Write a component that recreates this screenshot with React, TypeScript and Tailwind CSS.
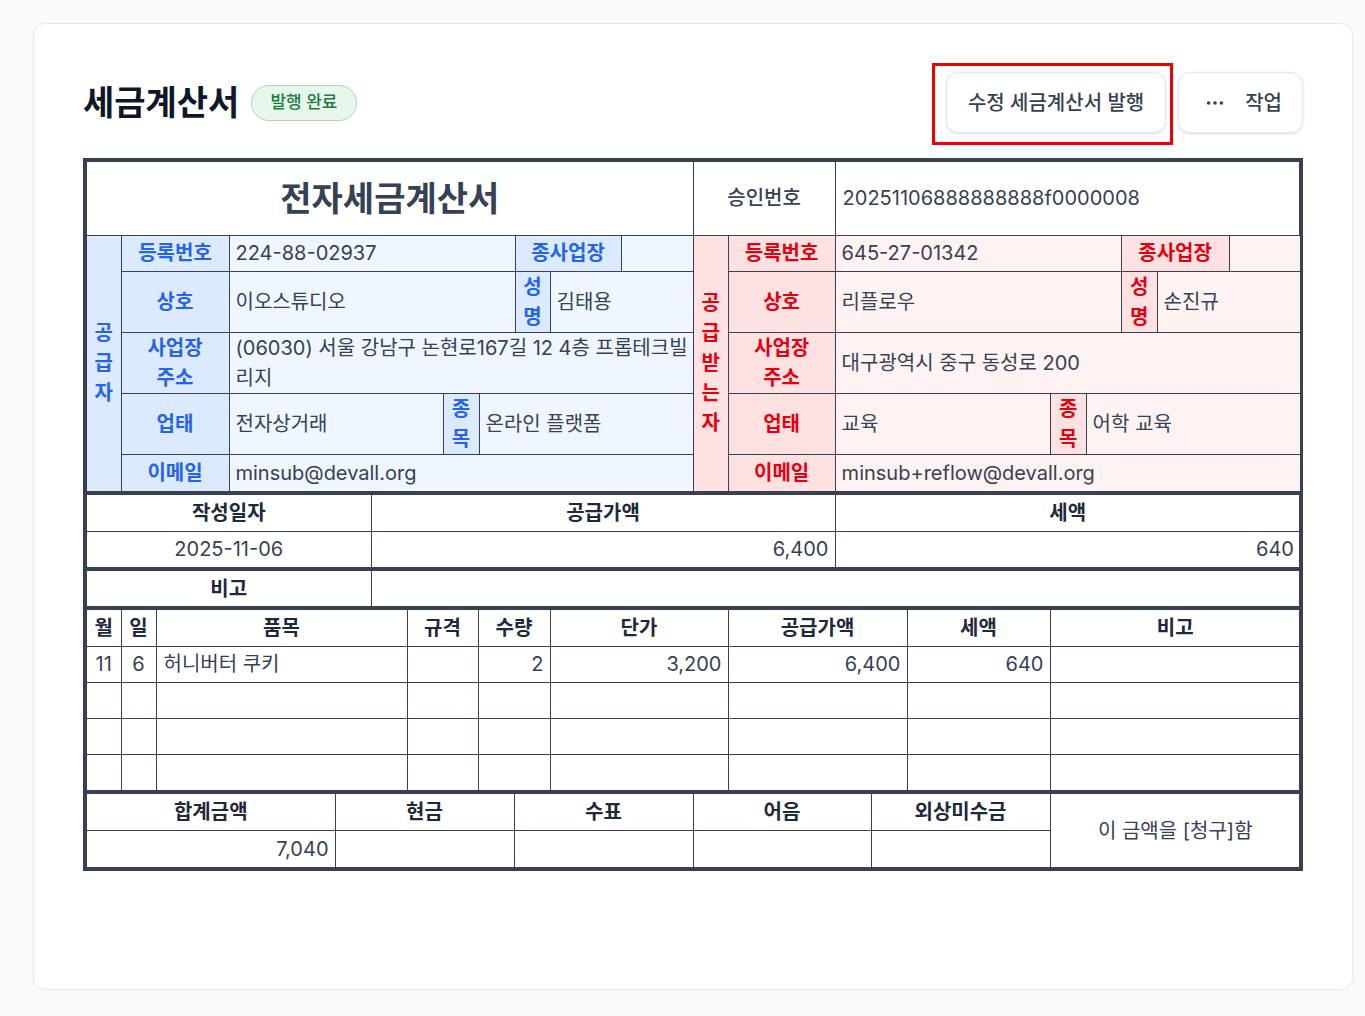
import { MoreHorizontal } from "lucide-react";

const line = "border border-[#374151]";
const blueL = `${line} bg-[#dbeafe] text-[#2563eb] font-semibold text-center text-[20px] leading-[30px]`;
const blueV = `${line} bg-[#eff6ff] text-gray-700 text-[20px] leading-[30px] px-[6px]`;
const redL = `${line} bg-[#fee2e2] text-[#e5000f] font-semibold text-center text-[20px] leading-[30px]`;
const redV = `${line} bg-[#fef2f2] text-gray-700 text-[20px] leading-[30px] px-[6px]`;
const head = `${line} text-center text-[20px] font-semibold text-gray-800 leading-[30px]`;
const cell = `${line} text-[20px] text-gray-700 leading-[30px] px-[6px]`;

function Stack({ text }: { text: string }) {
  return (
    <div className="flex flex-col items-center">
      {text.split("").map((c, i) => (
        <span key={i}>{c}</span>
      ))}
    </div>
  );
}

function Cols({ widths }: { widths: number[] }) {
  return (
    <colgroup>
      {widths.map((w, i) => (
        <col key={i} style={{ width: w }} />
      ))}
    </colgroup>
  );
}

const items = [
  { m: "11", d: "6", name: "허니버터 쿠키", spec: "", qty: "2", price: "3,200", supply: "6,400", tax: "640", note: "" },
  null,
  null,
  null,
];

export default function App() {
  return (
    <div className="min-h-screen bg-[#f9fafb] pt-[23px] pl-[33px] font-['Inter','Noto_Sans_CJK_KR',sans-serif]">
      <div className="w-[1320px] h-[967px] bg-white border border-gray-200 rounded-xl px-[49px] pt-[48px]">
        {/* 헤더 */}
        <div className="flex items-center justify-between h-[61px]">
          <div className="flex items-center gap-[12px]">
            <h1 className="text-[34px] font-bold text-gray-900 leading-none">세금계산서</h1>
            <span className="h-[36px] px-[18px] flex items-center rounded-full border border-[#a7d8b0] bg-[#e8f6eb] text-[17px] font-medium text-[#15803d]">
              발행 완료
            </span>
          </div>
          <div className="flex items-center gap-3">
            <div className="relative">
              <button className="h-[61px] px-[21px] rounded-xl border border-gray-200 bg-white shadow-sm text-[20px] font-medium text-gray-700">
                수정 세금계산서 발행
              </button>
              <div className="pointer-events-none absolute left-[-14px] top-[-9px] right-[-7px] bottom-[-12px] border-[3px] border-[#ee0000]" />
            </div>
            <button className="h-[61px] pl-[25px] pr-[20px] flex items-center gap-[19px] rounded-xl border border-gray-200 bg-white shadow-sm text-[20px] font-medium text-gray-700">
              <MoreHorizontal size={22} strokeWidth={2} />
              작업
            </button>
          </div>
        </div>

        {/* 세금계산서 본문 */}
        <div className="mt-[25px] border-4 border-[#374151]">
          <table className="w-full table-fixed border-collapse border-hidden">
            <Cols widths={[34, 108, 214, 36, 36, 35, 71, 72, 35, 107, 215, 36, 35, 36, 72, 71]} />
            <tbody>
              <tr className="h-[73px]">
                <td colSpan={8} className={`${line} text-center text-[34px] font-bold text-gray-700`}>
                  전자세금계산서
                </td>
                <td colSpan={2} className={`${line} text-center text-[20px] font-medium text-gray-700`}>
                  승인번호
                </td>
                <td colSpan={6} className={`${line} px-[7px] text-[20px] text-gray-700`}>
                  20251106888888888f0000008
                </td>
              </tr>
              <tr className="h-[36px]">
                <td rowSpan={5} className={blueL}>
                  <Stack text="공급자" />
                </td>
                <td className={blueL}>등록번호</td>
                <td colSpan={3} className={blueV}>224-88-02937</td>
                <td colSpan={2} className={blueL}>종사업장</td>
                <td className={blueV}></td>
                <td rowSpan={5} className={redL}>
                  <Stack text="공급받는자" />
                </td>
                <td className={redL}>등록번호</td>
                <td colSpan={3} className={redV}>645-27-01342</td>
                <td colSpan={2} className={redL}>종사업장</td>
                <td className={redV}></td>
              </tr>
              <tr className="h-[61px]">
                <td className={blueL}>상호</td>
                <td colSpan={3} className={blueV}>이오스튜디오</td>
                <td className={blueL}>
                  <Stack text="성명" />
                </td>
                <td colSpan={2} className={blueV}>김태용</td>
                <td className={redL}>상호</td>
                <td colSpan={3} className={redV}>리플로우</td>
                <td className={redL}>
                  <Stack text="성명" />
                </td>
                <td colSpan={2} className={redV}>손진규</td>
              </tr>
              <tr className="h-[61px]">
                <td className={blueL}>
                  사업장
                  <br />
                  주소
                </td>
                <td colSpan={6} className={`${blueV} pr-0`}>
                  (06030) 서울 강남구 논현로167길 12 4층 프롭테크빌리지
                </td>
                <td className={redL}>
                  사업장
                  <br />
                  주소
                </td>
                <td colSpan={6} className={redV}>대구광역시 중구 동성로 200</td>
              </tr>
              <tr className="h-[61px]">
                <td className={blueL}>업태</td>
                <td className={blueV}>전자상거래</td>
                <td className={blueL}>
                  <Stack text="종목" />
                </td>
                <td colSpan={4} className={blueV}>온라인 플랫폼</td>
                <td className={redL}>업태</td>
                <td className={redV}>교육</td>
                <td className={redL}>
                  <Stack text="종목" />
                </td>
                <td colSpan={4} className={redV}>어학 교육</td>
              </tr>
              <tr className="h-[37px]">
                <td className={blueL}>이메일</td>
                <td colSpan={6} className={blueV}>minsub@devall.org</td>
                <td className={redL}>이메일</td>
                <td colSpan={6} className={redV}>minsub+reflow@devall.org</td>
              </tr>
            </tbody>
          </table>

          <div className="border-t-4 border-[#374151]">
            <table className="w-full table-fixed border-collapse border-hidden">
              <Cols widths={[284, 464, 465]} />
              <tbody>
                <tr className="h-[36px]">
                  <td className={head}>작성일자</td>
                  <td className={head}>공급가액</td>
                  <td className={head}>세액</td>
                </tr>
                <tr className="h-[36px]">
                  <td className={`${cell} text-center`}>2025-11-06</td>
                  <td className={`${cell} text-right`}>6,400</td>
                  <td className={`${cell} text-right`}>640</td>
                </tr>
              </tbody>
            </table>
          </div>

          <div className="border-t-4 border-[#374151]">
            <table className="w-full table-fixed border-collapse border-hidden">
              <Cols widths={[284, 929]} />
              <tbody>
                <tr className="h-[35px]">
                  <td className={head}>비고</td>
                  <td className={cell}></td>
                </tr>
              </tbody>
            </table>
          </div>

          <div className="border-t-4 border-[#374151]">
            <table className="w-full table-fixed border-collapse border-hidden">
              <Cols widths={[34, 35, 251, 71, 72, 178, 179, 143, 250]} />
              <tbody>
                <tr className="h-[36px]">
                  {["월", "일", "품목", "규격", "수량", "단가", "공급가액", "세액", "비고"].map((h) => (
                    <td key={h} className={head}>
                      {h}
                    </td>
                  ))}
                </tr>
                {items.map((it, i) => (
                  <tr key={i} className="h-[36px]">
                    <td className={`${cell} px-0 text-center`}>{it?.m}</td>
                    <td className={`${cell} px-0 text-center`}>{it?.d}</td>
                    <td className={`${cell} px-[7px]`}>{it?.name}</td>
                    <td className={cell}>{it?.spec}</td>
                    <td className={`${cell} text-right`}>{it?.qty}</td>
                    <td className={`${cell} text-right`}>{it?.price}</td>
                    <td className={`${cell} text-right`}>{it?.supply}</td>
                    <td className={`${cell} text-right`}>{it?.tax}</td>
                    <td className={cell}>{it?.note}</td>
                  </tr>
                ))}
              </tbody>
            </table>
          </div>

          <div className="border-t-4 border-[#374151]">
            <table className="w-full table-fixed border-collapse border-hidden">
              <Cols widths={[248, 179, 179, 178, 179, 250]} />
              <tbody>
                <tr className="h-[36px]">
                  <td className={head}>합계금액</td>
                  <td className={head}>현금</td>
                  <td className={head}>수표</td>
                  <td className={head}>어음</td>
                  <td className={head}>외상미수금</td>
                  <td rowSpan={2} className={`${cell} text-center`}>
                    이 금액을 [청구]함
                  </td>
                </tr>
                <tr className="h-[37px]">
                  <td className={`${cell} text-right`}>7,040</td>
                  <td className={cell}></td>
                  <td className={cell}></td>
                  <td className={cell}></td>
                  <td className={cell}></td>
                </tr>
              </tbody>
            </table>
          </div>
        </div>
      </div>
    </div>
  );
}
